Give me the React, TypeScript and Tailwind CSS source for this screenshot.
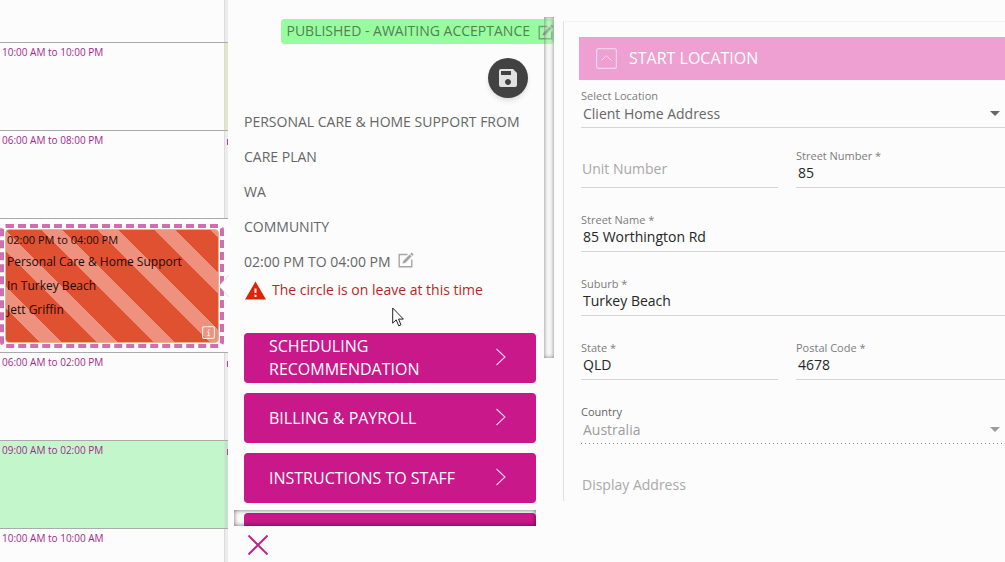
import { useState } from 'react';
import type { ReactNode } from 'react';
import { MdSave } from 'react-icons/md';

interface Slot {
    time: string;
    className?: string;
    nextClassName?: string;
    hasNext?: boolean;
}

const slotsBefore: Slot[] = [
    { time: '10:00 AM to 10:00 PM', nextClassName: 'bg-[#e3e8c4]' },
    { time: '06:00 AM to 08:00 PM', hasNext: true },
];

const slotsAfter: Slot[] = [
    { time: '06:00 AM to 02:00 PM', hasNext: true },
    { time: '09:00 AM to 02:00 PM', className: 'bg-[#c3f6cb]', nextClassName: 'bg-[#b9e9c1]', hasNext: true },
    { time: '10:00 AM to 10:00 AM' },
];

const sections = ['Scheduling Recommendation', 'Billing & Payroll', 'Instructions to Staff'];

function EditIcon() {
    return (
        <svg viewBox="0 0 16 16" className="h-4 w-4" fill="none" stroke="currentColor">
            <path d="M9.5 2.5H1.2v12.3h12.6V7.5" strokeWidth="1.4" />
            <path d="M5.2 8.9 11.6 2.5l2 2-6.4 6.4-2.7.7z" fill="currentColor" stroke="none" />
            <path d="m12.2 1.9 1.4-1.4 2 2-1.4 1.4z" fill="currentColor" stroke="none" />
        </svg>
    );
}

function SlotCell({ time, className = '', nextClassName = 'bg-[#ececec]', hasNext }: Slot) {
    return (
        <div className={`flex h-22 shrink-0 border-b border-[#aaaaad] ${className}`}>
            <div className="flex-1 pl-0.5 pt-px text-[10px] leading-4 text-[#a8268c]">{time}</div>
            <div className={`flex w-1 justify-end border-l border-[#dcdcdc] pt-2 ${nextClassName}`}>
                {hasNext && <div className="h-1.5 w-px bg-[#c2389c]"></div>}
            </div>
        </div>
    );
}

function ShiftCard() {
    return (
        <div className="h-[134px] shrink-0 border-b border-[#aaaaad] pr-1 pt-[5px]">
            <div className="h-[124px] rounded-md border-4 border-dashed border-[#cf6fb1] p-px">
                <div className="relative h-full rounded-sm border border-[#e2b98a] bg-[repeating-linear-gradient(45deg,#e05131_0px,#e05131_24px,#ee917e_24px,#ee917e_39px,#e05131_39px,#e05131_40px)] pl-px text-xs leading-6 text-[#1c0a08]">
                    <p className="pb-0.5 pt-0.5 text-[11px] leading-4">02:00 PM to 04:00 PM</p>
                    <p>Personal Care &amp; Home Support</p>
                    <p>In Turkey Beach</p>
                    <p>Jett Griffin</p>
                    <button
                        type="button"
                        aria-label="Shift information"
                        className="absolute bottom-[3px] right-[3px] text-[#fbe3dc]"
                    >
                        <svg viewBox="0 0 13 13" className="h-[13px] w-[13px]" fill="none" stroke="currentColor">
                            <rect x="0.6" y="0.6" width="11.8" height="11.8" rx="1.6" strokeWidth="1.2" />
                            <path d="M6.8 3v1.5M5.4 5.8h1.2V9.5M5.2 9.6h2.6" strokeWidth="1.3" />
                        </svg>
                    </button>
                </div>
            </div>
        </div>
    );
}

function SectionButton({ label }: { label: string }) {
    return (
        <button
            type="button"
            className="flex h-[50px] w-full shrink-0 items-center justify-between rounded bg-[#c91889] pl-[25px] pr-[29px] text-left text-base leading-[23px] text-white uppercase"
        >
            <span className="max-w-48">{label}</span>
            <svg viewBox="0 0 12 18" className="mb-0.5 h-[18px] w-3" fill="none" stroke="#f6cdea" strokeWidth="1.1">
                <path d="m1.5 1 8.5 8-8.5 8" />
            </svg>
        </button>
    );
}

interface FieldProps {
    id: string;
    label: string;
    value?: string;
}

function TextField({ id, label, value }: FieldProps) {
    return (
        <div className="border-b border-[#d4d4d4] pb-[5px]">
            <label htmlFor={id} className="block text-[11px] leading-4 text-[#7d7d7d]">
                {label}
            </label>
            <input
                id={id}
                defaultValue={value}
                className="block h-[18px] w-full bg-transparent pl-0.5 text-sm text-[#262626] outline-none"
            />
        </div>
    );
}

// Empty field, the label rests inside the box
function EmptyField({ id, label }: FieldProps) {
    return (
        <div className="border-b border-[#d4d4d4] pb-[9px] pt-3">
            <input
                id={id}
                aria-label={label}
                placeholder={label}
                className="block h-[18px] w-full bg-transparent pl-px text-sm outline-none placeholder:text-[#a9a9a9]"
            />
        </div>
    );
}

function SelectField({ id, label, value, disabled }: FieldProps & { disabled?: boolean }) {
    return (
        <div>
            <label htmlFor={id} className={`block text-[11px] leading-4 ${disabled ? 'text-[#666666]' : 'text-[#7d7d7d]'}`}>
                {label}
            </label>
            <div className={`relative pb-[3px] ${disabled ? 'text-[#9c9c9c]' : 'text-[#666666]'}`}>
                <select
                    id={id}
                    disabled={disabled}
                    className="block h-5 w-full appearance-none bg-transparent pl-0.5 text-sm leading-5 opacity-100 outline-none"
                >
                    <option>{value}</option>
                </select>
                <svg viewBox="0 0 10 5" className="pointer-events-none absolute right-[5px] top-[7px] h-[5px] w-[10px]" fill="currentColor">
                    <path d="M0 0h10L5 5z" />
                </svg>
            </div>
            <div
                className={
                    disabled
                        ? 'h-px bg-[repeating-linear-gradient(90deg,#8a8a8a_0px,#8a8a8a_1px,transparent_1px,transparent_4px)]'
                        : 'h-px bg-[#d4d4d4]'
                }
            ></div>
        </div>
    );
}

function Row({ children }: { children: ReactNode }) {
    return <div className="grid grid-cols-[197fr_209fr] gap-[18px]">{children}</div>;
}

export default function App() {
    const [open, setOpen] = useState(true);

    return (
        <div className="flex h-screen overflow-hidden bg-[#fcfcfc] font-['Open_Sans',sans-serif] text-[#666666]">
            {/* Schedule column */}
            <div className="flex w-57 shrink-0 flex-col overflow-hidden">
                <div className="flex h-[43px] shrink-0 justify-end border-b border-[#aaaaad]">
                    <div className="w-1 border-l border-[#dcdcdc] bg-[#ececec]"></div>
                </div>
                {slotsBefore.map((slot) => (
                    <SlotCell key={slot.time} {...slot} />
                ))}
                <ShiftCard />
                {slotsAfter.map((slot) => (
                    <SlotCell key={slot.time} {...slot} />
                ))}
            </div>

            {/* Shift details */}
            <aside className="relative flex w-[335px] shrink-0 flex-col">
                <svg viewBox="0 0 10 22" className="absolute -left-[9px] top-[275px] h-[22px] w-[10px]" fill="#fcfcfc">
                    <path d="M10 0v22L0 11z" />
                    <path d="M10 0 0 11l10 11" fill="none" stroke="#d8d0d4" strokeWidth="0.7" />
                </svg>

                <div className="relative mt-[17px] flex min-h-0 flex-1 flex-col overflow-hidden pl-4 pr-[27px]">
                    <div className="-mr-[18px] mt-0.5 flex h-[25px] shrink-0 items-center self-end rounded bg-[#97fc9e] pl-[5px] text-sm text-[#567e59]">
                        <span className="pb-0.5 pr-2 whitespace-nowrap">PUBLISHED - AWAITING ACCEPTANCE</span>
                        <button type="button" aria-label="Edit status" className="text-[#829884]">
                            <EditIcon />
                        </button>
                    </div>
                    <button
                        type="button"
                        aria-label="Save"
                        className="mr-2 mt-3.5 flex h-10 w-10 shrink-0 items-center justify-center self-end rounded-full bg-[#424242] text-[#e2e2e2] shadow-md"
                    >
                        <MdSave className="h-6 w-6" />
                    </button>

                    <div className="mt-1.5 shrink-0 text-sm leading-[35px] whitespace-nowrap uppercase">
                        <p>Personal Care &amp; Home Support From</p>
                        <p>Care Plan</p>
                        <p>WA</p>
                        <p>Community</p>
                        <div className="flex items-center gap-[7px]">
                            <span>02:00 PM to 04:00 PM</span>
                            <button type="button" aria-label="Edit time" className="pb-1 text-[#a6a6a6]">
                                <EditIcon />
                            </button>
                        </div>
                    </div>

                    <div className="mt-px flex h-5 shrink-0 items-center gap-1.5 pl-px text-sm text-[#b9281f]">
                        <svg viewBox="0 0 22 19" className="h-[19px] w-[21px]">
                            <path d="M11 0 22 19H0z" fill="#dc2408" />
                            <path d="M11 7.5v4.5M11 14v2.4" stroke="#fff" strokeWidth="2" />
                        </svg>
                        <span>The circle is on leave at this time</span>
                    </div>

                    <div className="mt-[33px] flex shrink-0 flex-col gap-2.5">
                        {sections.map((label) => (
                            <SectionButton key={label} label={label} />
                        ))}
                        <div className="h-[50px] rounded bg-[#c91889]"></div>
                    </div>

                    {/* Scrollbars lie over the content */}
                    <div className="absolute right-[9px] top-0 h-[341px] w-[10px] bg-[#f2f2f2]/30 shadow-[inset_0_0_4px_#00000080]"></div>
                    <div className="absolute bottom-0 left-1.5 right-[27px] h-4 shadow-[inset_0_0_5px_#00000090]"></div>
                </div>

                <div className="h-9 shrink-0 pl-5 pt-[9px]">
                    <button type="button" aria-label="Close" className="block text-[#c2258c]">
                        <svg viewBox="0 0 20 20" className="h-5 w-5" fill="none" stroke="currentColor" strokeWidth="2">
                            <path d="m.5.5 19 19M19.5.5l-19 19" />
                        </svg>
                    </button>
                </div>

                <svg viewBox="0 0 12 20" className="pointer-events-none absolute left-[164px] top-[307px] h-5 w-3">
                    <path d="M.7 1v15.2l3.5-3.3 2.5 5.9 2.3-1-2.5-5.7h4.9z" fill="#fff" stroke="#222" strokeWidth="1" />
                </svg>
            </aside>

            {/* Start location */}
            <main className="mt-[21px] h-[480px] min-w-0 flex-1 overflow-hidden border-l border-t border-[#e0e0e0] border-t-[#f3f3f3] pl-[15px] pt-[15px]">
                <button
                    type="button"
                    onClick={() => setOpen(!open)}
                    className="flex h-[43px] w-full items-center gap-3 bg-[#eda0d1] pl-[17px] text-base text-white"
                >
                    <svg viewBox="0 0 21 21" className="h-[21px] w-[21px]" fill="none" stroke="#f9d3ec">
                        <rect x="0.6" y="0.6" width="19.8" height="19.8" rx="2" strokeWidth="1.2" />
                        <path d={open ? 'm5.5 12.5 5-5 5 5' : 'm5.5 8.5 5 5 5-5'} />
                    </svg>
                    <span className="pb-0.5">START LOCATION</span>
                </button>
                {open && (
                    <form className="flex flex-col pl-0.5 pt-2">
                        <SelectField id="location" label="Select Location" value="Client Home Address" />
                        <div className="flex flex-col gap-6 py-5">
                            <Row>
                                <EmptyField id="unit" label="Unit Number" />
                                <TextField id="number" label="Street Number *" value="85" />
                            </Row>
                            <TextField id="street" label="Street Name *" value="85 Worthington Rd" />
                            <TextField id="suburb" label="Suburb *" value="Turkey Beach" />
                            <Row>
                                <TextField id="state" label="State *" value="QLD" />
                                <TextField id="postcode" label="Postal Code *" value="4678" />
                            </Row>
                            <SelectField id="country" label="Country" value="Australia" disabled />
                        </div>
                        <EmptyField id="display" label="Display Address" />
                    </form>
                )}
            </main>
        </div>
    );
}
